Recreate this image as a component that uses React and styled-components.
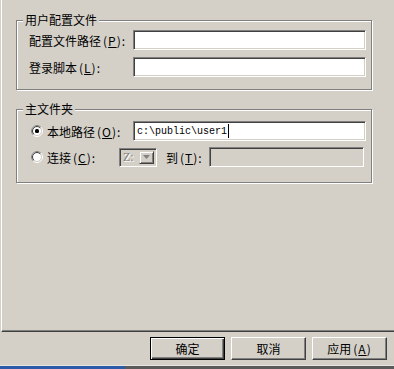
import React from 'react'
import styled, {createGlobalStyle} from 'styled-components'

const GlobalStyle = createGlobalStyle`
html, body{
    margin: 0;
    padding: 0;
    background: #d4d0c8;
}
body{
    font-family: "SimSun", "Noto Sans CJK SC", sans-serif;
    font-size: 12px;
    color: #000;
}
`

function Radio({checked}) {
  return (
    <RadioBox width="12" height="12" viewBox="0 0 12 12">
      <circle cx="6" cy="6" r="5.5" fill="none" stroke="#fff" />
      <path d="M2.1 9.9 A5.5 5.5 0 0 1 9.9 2.1" fill="none" stroke="#808080" />
      <circle cx="6" cy="6" r="4.5" fill="#fff" stroke="#d4d0c8" />
      <path d="M2.8 9.2 A4.5 4.5 0 0 1 9.2 2.8" fill="none" stroke="#404040" />
      {checked && <rect x="4" y="4" width="4" height="4" rx="1.5" fill="#000" />}
    </RadioBox>
  )
}

function App() {
  return (
    <Page>
      <GlobalStyle />
      <TabPage>
        <Group top={20} height={70}>
          <Caption>用户配置文件</Caption>
          <FieldRow>
            <Label>配置文件路径<Acc>(<u>P</u>):</Acc></Label>
            <Edit />
          </FieldRow>
          <FieldRow>
            <Label>登录脚本<Acc>(<u>L</u>):</Acc></Label>
            <Edit />
          </FieldRow>
        </Group>
        <Group top={19} height={74} padTop={11} padLeft={14} gap={6}>
          <Caption>主文件夹</Caption>
          <FieldRow>
            <RadioLabel width={102}>
              <Radio checked />
              <span>本地路径<Acc>(<u>O</u>):</Acc></span>
            </RadioLabel>
            <Edit>
              <Mono>c:\public\user1</Mono>
              <Caret />
            </Edit>
          </FieldRow>
          <FieldRow>
            <RadioLabel width={88}>
              <Radio />
              <span>连接<Acc>(<u>C</u>):</Acc></span>
            </RadioLabel>
            <Combo>
              <ComboText>Z:</ComboText>
              <DropButton>
                <svg width="7" height="4" viewBox="0 0 7 4">
                  <path d="M0 0 H7 L3.5 4 Z" fill="#808080" />
                </svg>
              </DropButton>
            </Combo>
            <ToLabel>到<Acc>(<u>T</u>):</Acc></ToLabel>
            <Edit disabled width={155} />
          </FieldRow>
        </Group>
      </TabPage>
      <ButtonBar>
        <Button isDefault>确定</Button>
        <Button>取消</Button>
        <Button>应用<Acc>(<u>A</u>)</Acc></Button>
      </ButtonBar>
      <Taskbar>
        <TaskBlue />
        <TaskRest />
      </Taskbar>
    </Page>
  )
}
export default App

const Page = styled.div`
width: 394px;
height: 369px;
display: flex;
flex-direction: column;
overflow: hidden;
`
const TabPage = styled.div`
margin-left: 1px;
width: 383px;
height: 331px;
border-left: 1px solid #fff;
border-right: 1px solid #404040;
border-bottom: 1px solid #404040;
box-shadow: inset -1px -1px 0 #808080;
padding-left: 14px;
display: flex;
flex-direction: column;
`
const Group = styled.div`
position: relative;
box-sizing: border-box;
margin-top: ${p => p.top}px;
width: 356px;
height: ${p => p.height}px;
border: 1px solid #808080;
box-shadow: inset 1px 1px 0 #fff, 1px 1px 0 #fff;
padding: ${p => p.padTop || 9}px 5px 0 ${p => p.padLeft || 12}px;
display: flex;
flex-direction: column;
gap: ${p => p.gap || 7}px;
`
const Caption = styled.div`
position: absolute;
top: -8px;
left: 6px;
padding: 0 2px;
background: #d4d0c8;
line-height: 14px;
`
const FieldRow = styled.div`
display: flex;
align-items: center;
height: 20px;
`
const Label = styled.div`
width: 104px;
white-space: nowrap;
`
const Acc = styled.span`
margin-left: 2px;
letter-spacing: 1px;
`
const RadioLabel = styled.label`
width: ${p => p.width}px;
display: flex;
align-items: center;
gap: 4px;
white-space: nowrap;
`
const RadioBox = styled.svg`
display: block;
flex: none;
`
const Edit = styled.div`
box-sizing: border-box;
width: ${p => p.width || 233}px;
height: 20px;
border-top: 1px solid #808080;
border-left: 1px solid #808080;
border-right: 1px solid #fff;
border-bottom: 1px solid #fff;
box-shadow: inset 1px 1px 0 #404040, inset -1px -1px 0 #d4d0c8;
background: ${p => p.disabled ? '#d4d0c8' : '#fff'};
display: flex;
align-items: center;
padding-left: 3px;
`
const Mono = styled.span`
font-family: "Liberation Mono", "DejaVu Sans Mono", monospace;
font-size: 10px;
`
const Caret = styled.span`
width: 1px;
height: 14px;
background: #000;
margin-left: 1px;
`
const Combo = styled.div`
box-sizing: border-box;
width: 38px;
height: 19px;
border-top: 1px solid #808080;
border-left: 1px solid #808080;
border-right: 1px solid #fff;
border-bottom: 1px solid #fff;
box-shadow: inset 1px 1px 0 #404040, inset -1px -1px 0 #d4d0c8;
display: flex;
align-items: stretch;
padding: 2px;
`
const ComboText = styled.span`
flex: 1;
color: #808080;
text-shadow: 1px 1px 0 #fff;
font-family: "Liberation Serif", serif;
font-size: 12px;
line-height: 13px;
padding-left: 1px;
`
const DropButton = styled.div`
box-sizing: border-box;
width: 15px;
border-top: 1px solid #d4d0c8;
border-left: 1px solid #d4d0c8;
border-right: 1px solid #404040;
border-bottom: 1px solid #404040;
box-shadow: inset 1px 1px 0 #fff, inset -1px -1px 0 #808080;
display: flex;
align-items: center;
justify-content: center;
`
const ToLabel = styled.div`
width: 43px;
margin-left: 9px;
white-space: nowrap;
`
const ButtonBar = styled.div`
display: flex;
justify-content: flex-end;
gap: 6px;
padding-right: 7px;
margin-top: 5px;
`
const Button = styled.button`
box-sizing: border-box;
width: 75px;
height: 23px;
padding: 0;
font: inherit;
color: #000;
background: #d4d0c8;
border-top: 1px solid ${p => p.isDefault ? '#000' : '#fff'};
border-left: 1px solid ${p => p.isDefault ? '#000' : '#fff'};
border-right: 1px solid ${p => p.isDefault ? '#000' : '#404040'};
border-bottom: 1px solid ${p => p.isDefault ? '#000' : '#404040'};
box-shadow: ${p => p.isDefault
  ? 'inset 1px 1px 0 #fff, inset -1px -1px 0 #404040, inset -2px -2px 0 #808080'
  : 'inset -1px -1px 0 #808080'};
`
const Taskbar = styled.div`
margin-top: auto;
height: 3px;
display: flex;
border-top: 1px solid #e8e6e0;
`
const TaskBlue = styled.div`
width: 125px;
background: #2a5aa8;
`
const TaskRest = styled.div`
flex: 1;
background: #5a5a5a;
`
